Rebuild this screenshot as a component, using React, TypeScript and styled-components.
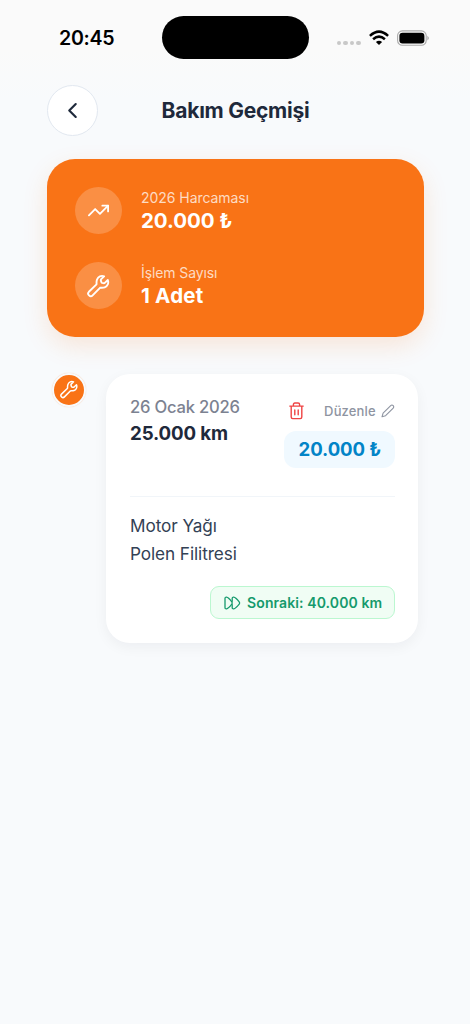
import React from "react";
import styled, { createGlobalStyle } from "styled-components";
import { TrendingUp } from "lucide-react";
import { IoChevronBack } from "react-icons/io5";

const Global = createGlobalStyle`
  * { box-sizing: border-box; }
  body { margin: 0; background: #f8fafc; font-family: Inter, "Liberation Sans", sans-serif; }
`;

const Screen = styled.main`
  width: 470px;
  height: 1024px;
  overflow: hidden;
  background: linear-gradient(#fafafa 0, #fafafa 50px, #f8fafc 100px);
`;

const Text = styled.span<{ $size: number; $weight?: number; $color: string; $line: number; $track?: number }>`
  display: block;
  margin: 0;
  white-space: nowrap;
  font-size: ${(p) => p.$size}px;
  font-weight: ${(p) => p.$weight ?? 400};
  color: ${(p) => p.$color};
  line-height: ${(p) => p.$line}px;
  letter-spacing: ${(p) => p.$track ?? 0}px;
`;

const Title = styled(Text)`
  padding-top: 2px;
`;

const StatusBar = styled.div`
  display: grid;
  grid-template-columns: 103px 147px 1fr;
  height: 60px;
  padding: 16px 39px 0 59px;
`;

const Island = styled.div`
  height: 43px;
  border-radius: 22px;
  background: #000;
`;

const StatusIcons = styled.div`
  display: flex;
  align-items: center;
  height: 44px;
  padding-left: 28px;
`;

const Dots = styled.div`
  display: flex;
  gap: 2px;
  margin: 10px 8px 0 0;
`;

const Dot = styled.i`
  width: 4.4px;
  height: 4.4px;
  border-radius: 50%;
  background: #c8c8c8;
`;

const Header = styled.header`
  display: grid;
  grid-template-columns: 52px 1fr 52px;
  align-items: center;
  justify-items: center;
  height: 52px;
  margin: 24px 46px 0 47px;
`;

const BackButton = styled.button`
  display: flex;
  align-items: center;
  justify-content: center;
  justify-self: start;
  width: 51px;
  height: 51px;
  padding: 0;
  border: 1px solid #e2e8f0;
  border-radius: 50%;
  background: #fff;
  color: #1e293b;
`;

const Summary = styled.section`
  display: flex;
  flex-direction: column;
  gap: 28px;
  width: 377px;
  height: 178px;
  margin: 23.4px 0 0 47px;
  padding: 28px;
  border-radius: 28px;
  background: #f97316;
  box-shadow: 0 9px 24px rgba(249, 115, 22, 0.15);
`;

const Stat = styled.div`
  display: flex;
  gap: 19px;
  height: 47px;
`;

const StatIcon = styled.div`
  display: flex;
  align-items: center;
  justify-content: center;
  width: 47px;
  height: 47px;
  border-radius: 50%;
  background: rgba(255, 255, 255, 0.2);
  color: #fff;
`;

const StatBody = styled.div`
  padding-top: 1px;
`;

const Timeline = styled.section`
  display: flex;
  align-items: flex-start;
  gap: 20.4px;
  margin: 36.6px 0 0 52px;
`;

const Marker = styled.div`
  display: flex;
  align-items: center;
  justify-content: center;
  width: 34px;
  height: 34px;
  margin-top: -1px;
  border: 2px solid #f8fafc;
  border-radius: 50%;
  background: #f97316;
  color: #fff;
  box-shadow: 0 0 1px rgba(249, 115, 22, 0.4);
`;

const Card = styled.article`
  width: 312px;
  height: 269px;
  padding: 23px 23px 24px 23.6px;
  border-radius: 24px;
  background: #fff;
  box-shadow: 0 4px 14px rgba(15, 23, 42, 0.05);
`;

const CardTop = styled.div`
  display: flex;
  justify-content: space-between;
  height: 100px;
  border-bottom: 1px solid #f1f5f9;
`;

const Side = styled.div`
  display: flex;
  flex-direction: column;
  align-items: flex-end;
`;

const Actions = styled.div`
  display: flex;
  align-items: center;
  gap: 20px;
  height: 28px;
`;

const Action = styled.button<{ $color: string }>`
  display: flex;
  align-items: center;
  gap: 5.6px;
  padding: 0;
  border: 0;
  background: none;
  font-family: inherit;
  color: ${(p) => p.$color};
`;

const Price = styled.div`
  display: flex;
  align-items: center;
  justify-content: center;
  width: 111px;
  height: 37px;
  margin-top: 6px;
  border-radius: 12px;
  background: #f0f9ff;
`;

const Items = styled.div`
  margin-top: 15px;
`;

const Next = styled.div`
  display: flex;
  align-items: center;
  justify-content: center;
  gap: 6.5px;
  width: 185px;
  height: 33px;
  margin: 18px 0 0 auto;
  padding-top: 1px;
  border: 1px solid #bbf7d0;
  border-radius: 9px;
  background: #f0fdf4;
  color: #159a6c;
`;

const Wifi = () => (
  <svg width="20" height="16" viewBox="0 0 20 16" fill="none" stroke="#000" strokeWidth="2.5">
    <path d="M.9 5.8Q10-2.6 19.1 5.8M4.1 9.3Q10 4 15.9 9.3" />
    <path d="M10 15.1 6.9 12Q10 9.3 13.1 12Z" fill="#000" stroke="none" />
  </svg>
);

const BatterySvg = styled.svg`
  margin-left: 8.6px;
`;

const Battery = () => (
  <BatterySvg width="33" height="16" viewBox="0 0 33 16">
    <rect x=".6" y=".9" width="28.6" height="14.4" rx="4.7" fill="none" stroke="#aaa" strokeWidth="1.1" />
    <rect x="2.4" y="2.8" width="25" height="10.6" rx="3.2" />
    <path d="M30.4 5.8q3 2.3 0 4.6z" fill="#aaa" />
  </BatterySvg>
);

const WrenchIcon = ({ size }: { size: number }) => (
  <svg width={size} height={size} viewBox="0.6 0.6 24 24" fill="none" stroke="currentColor" strokeWidth="1.9" strokeLinecap="round" strokeLinejoin="round">
    <path d="M17.7 2.9 14.8 5.8a1.4 1.4 0 0 0-.3 1.4l.5 1.6c.1.3.3.5.6.6l1.4.4a1.4 1.4 0 0 0 1.4-.3l3-2.9c1.2 3-.2 6.2-3.1 7.3-1.9.7-3.4.2-4.7.5L6.2 21.9a2.5 2.5 0 0 1-3.7-3.5l7.6-7.4c.2-1.2-.3-2.9.5-4.8 1.2-3 4.2-4.5 7.1-3.3z" />
  </svg>
);

const Trash = () => (
  <svg width="15" height="18" viewBox="0 0 15 18" fill="none" stroke="currentColor" strokeWidth="1.4" strokeLinecap="round" strokeLinejoin="round">
    <path d="M.8 4.1h13.4M4.4 4.1V2.5q0-1.5 1.5-1.5h3.2q1.5 0 1.5 1.5v1.6M2.2 4.1v11q0 1.5 1.5 1.5h7.6q1.5 0 1.5-1.5v-11M5.8 8v4.8M9.2 8v4.8" />
  </svg>
);

const Pencil = () => (
  <svg width="14" height="14" viewBox="0 0 14 14" fill="none" stroke="currentColor" strokeWidth="1.1" strokeLinecap="round" strokeLinejoin="round">
    <path d="m1 12.8 1.1-3.7 7.6-7.5a1.7 1.7 0 0 1 2.5 2.5l-7.6 7.6z" />
  </svg>
);

const Forward = () => (
  <svg width="17" height="14" viewBox="0 0 17 14" fill="none" stroke="currentColor" strokeWidth="1.3" strokeLinejoin="round" strokeLinecap="round">
    <path d="M1 2.6Q1 .9 2.6 1.1 4.3 1.3 7.8 5.8q.9 1.2 0 2.4-3.5 4.5-5.2 4.7Q1 13.1 1 11.4z" />
    <path d="M8.2 5.3V2.6q0-1.7 1.6-1.5 1.7.2 5.4 4.7.9 1.2 0 2.4-3.7 4.5-5.4 4.7-1.6.2-1.6-1.5V8.7" />
  </svg>
);

export default function App() {
  return (
    <Screen>
      <Global />
      <StatusBar>
        <Text $size={19.6} $weight={600} $color="#000" $line={45} $track={-0.3}>20:45</Text>
        <Island />
        <StatusIcons>
          <Dots><Dot /><Dot /><Dot /><Dot /></Dots>
          <Wifi />
          <Battery />
        </StatusIcons>
      </StatusBar>
      <Header>
        <BackButton aria-label="Geri"><IoChevronBack size={23} /></BackButton>
        <Title as="h1" $size={21} $weight={700} $color="#1e293b" $line={28} $track={-0.25}>Bakım Geçmişi</Title>
      </Header>
      <Summary>
        <Stat>
          <StatIcon><TrendingUp size={23} strokeWidth={1.9} /></StatIcon>
          <StatBody>
            <Text $size={14} $color="rgba(255,255,255,.75)" $line={19} $track={-0.05}>2026 Harcaması</Text>
            <Text $size={20.5} $weight={700} $color="#fff" $line={27} $track={-0.08}>20.000 ₺</Text>
          </StatBody>
        </Stat>
        <Stat>
          <StatIcon><WrenchIcon size={24} /></StatIcon>
          <StatBody>
            <Text $size={14} $color="rgba(255,255,255,.75)" $line={19} $track={-0.1}>İşlem Sayısı</Text>
            <Text $size={20.5} $weight={700} $color="#fff" $line={27} $track={0.2}>1 Adet</Text>
          </StatBody>
        </Stat>
      </Summary>
      <Timeline>
        <Marker><WrenchIcon size={19} /></Marker>
        <Card>
          <CardTop>
            <div>
              <Text $size={16.6} $weight={500} $color="#7c8291" $line={21} $track={-0.22}>26 Ocak 2026</Text>
              <Text $size={18.7} $weight={700} $color="#1e293b" $line={31} $track={-0.12}>25.000 km</Text>
            </div>
            <Side>
              <Actions>
                <Action $color="#ef4444" aria-label="Sil"><Trash /></Action>
                <Action $color="#8e94a1">
                  <Text $size={13} $weight={500} $color="#8e94a1" $line={18} $track={0.15}>Düzenle</Text>
                  <Pencil />
                </Action>
              </Actions>
              <Price><Text $size={18.6} $weight={700} $color="#0284c7" $line={24} $track={-0.1}>20.000 ₺</Text></Price>
            </Side>
          </CardTop>
          <Items>
            <Text $size={17.2} $color="#334155" $line={28} $track={-0.08}>Motor Yağı</Text>
            <Text $size={17.2} $color="#334155" $line={28} $track={-0.08}>Polen Filitresi</Text>
          </Items>
          <Next>
            <Forward />
            <Text $size={14} $weight={600} $color="#159a6c" $line={20} $track={0.1}>Sonraki: 40.000 km</Text>
          </Next>
        </Card>
      </Timeline>
    </Screen>
  );
}
